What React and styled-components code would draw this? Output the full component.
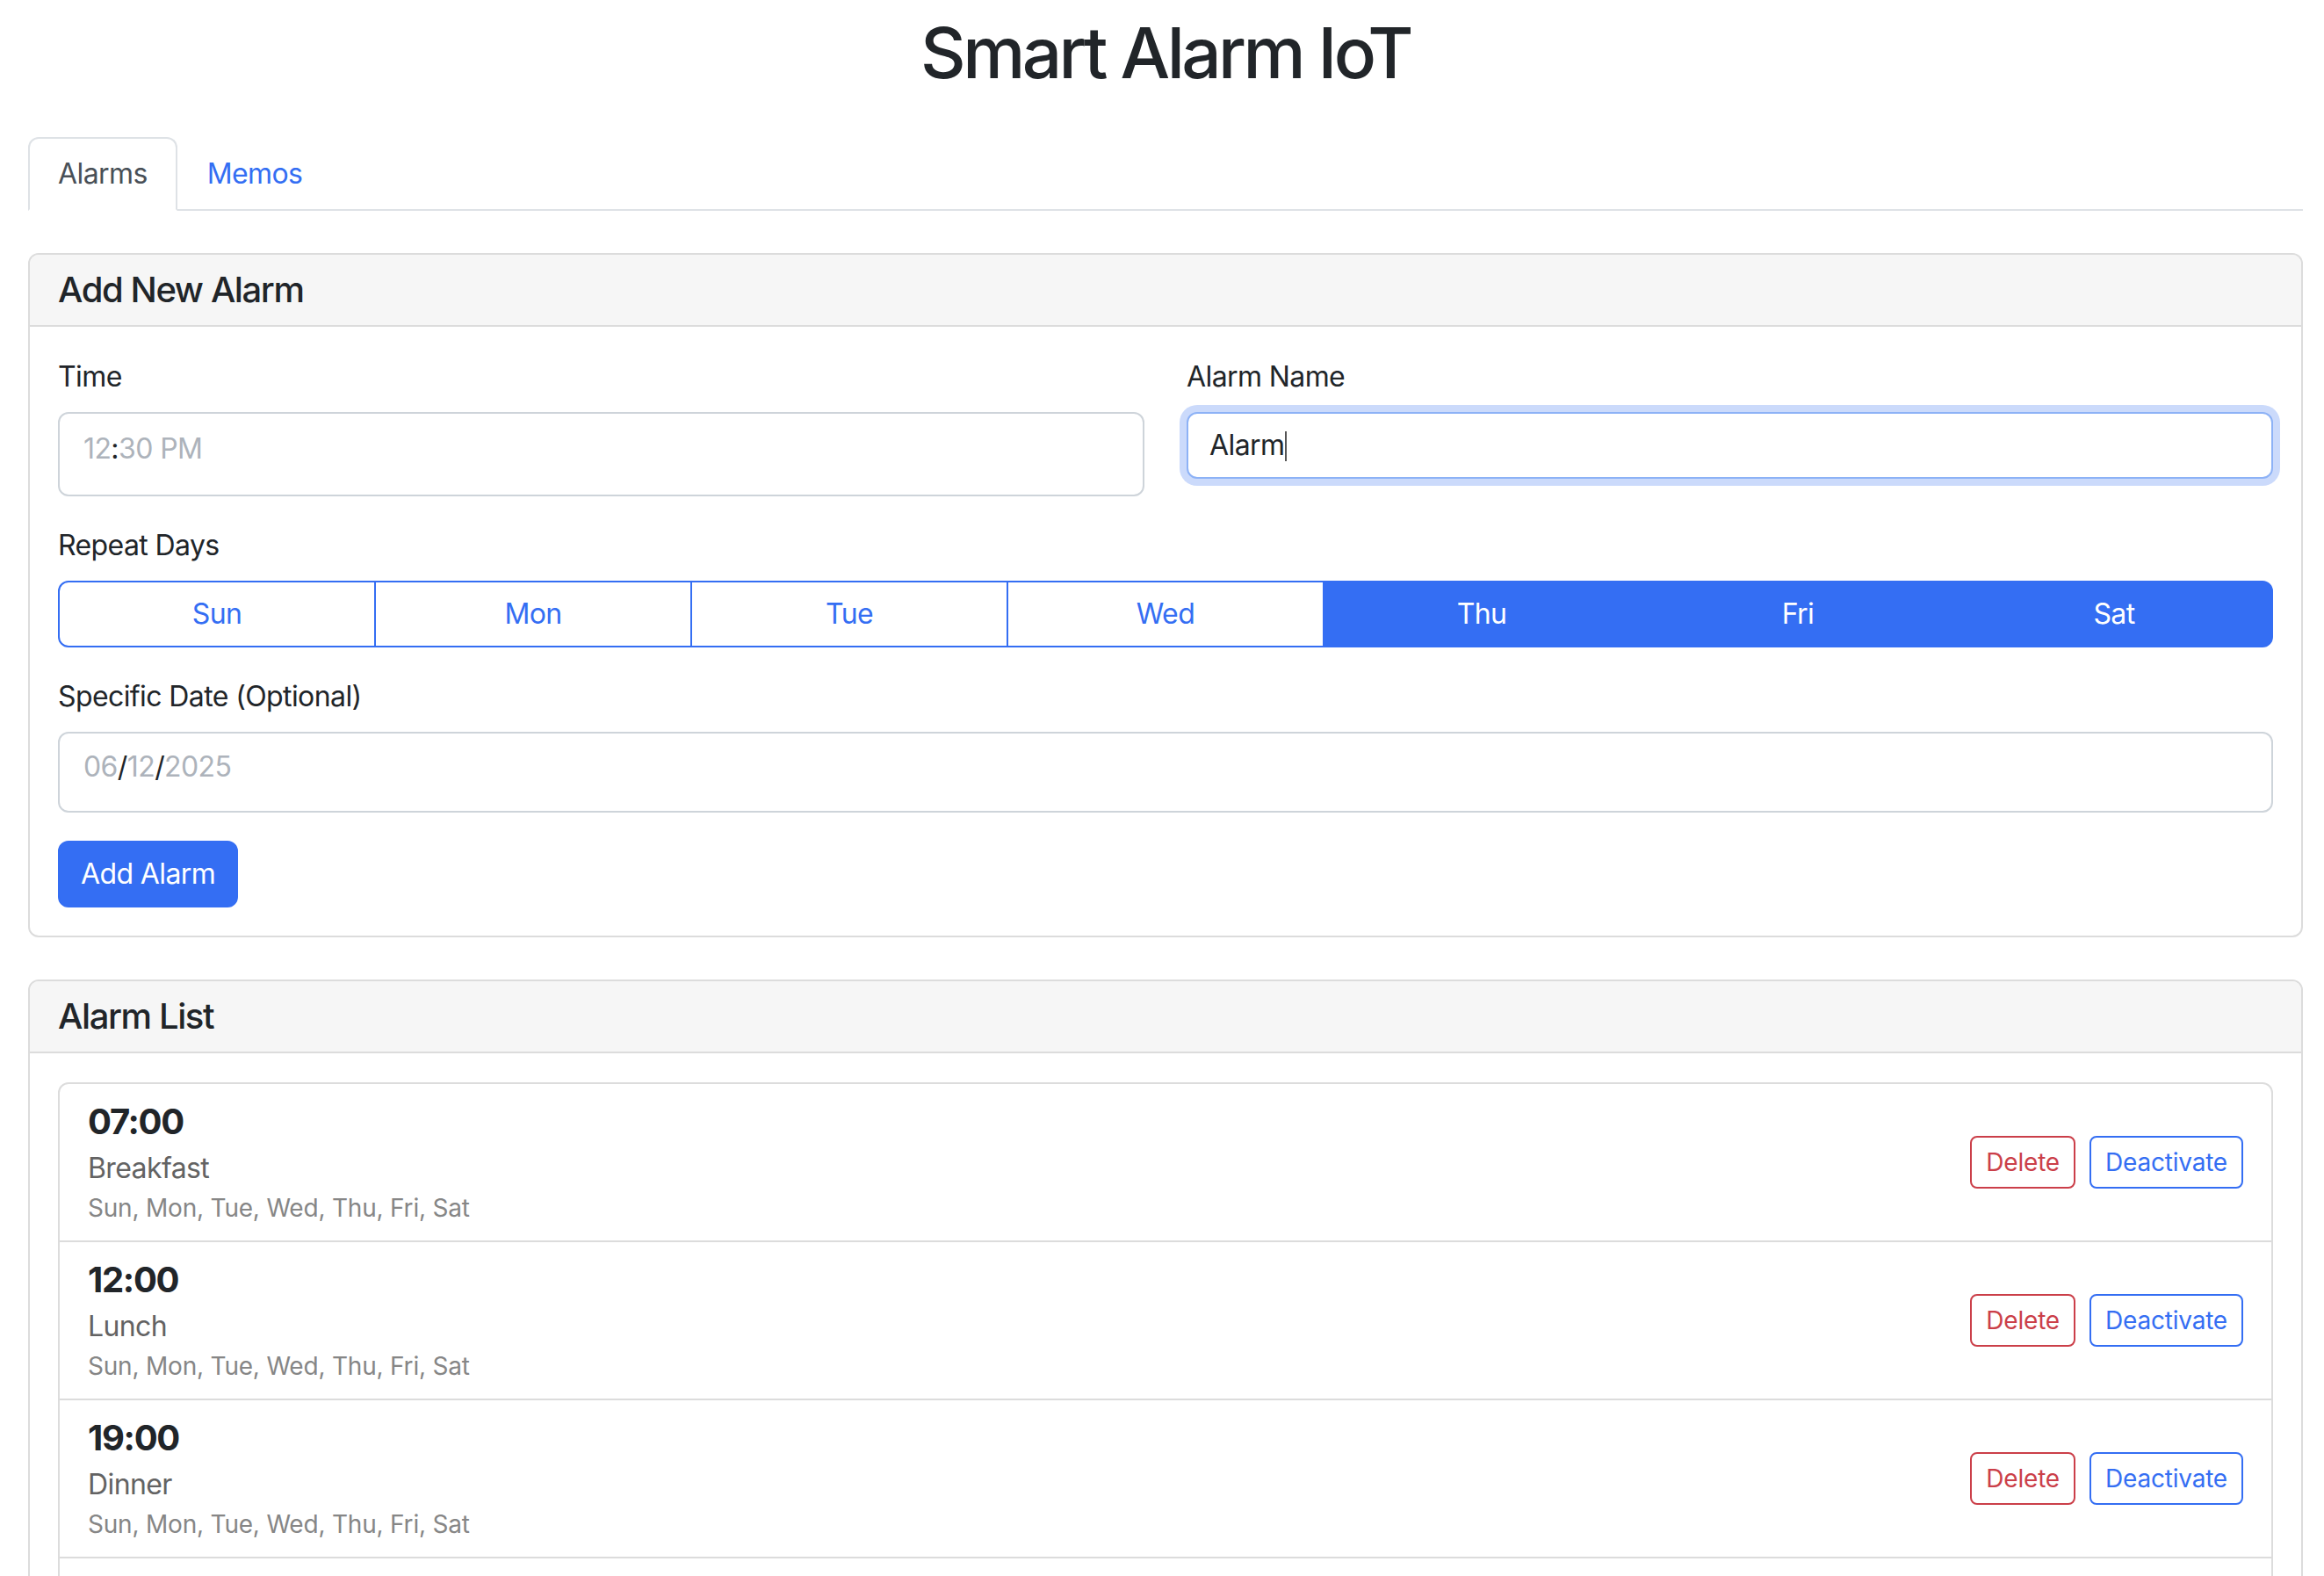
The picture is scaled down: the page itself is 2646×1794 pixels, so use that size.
import React from "react";
import styled, { createGlobalStyle, css } from "styled-components";

const blue = "#346ef3";
const red = "#cb3f49";
const ink = "#212529";

const GlobalStyle = createGlobalStyle`
  html, body {
    margin: 0;
    padding: 0;
    background: #fff;
  }
  body {
    font-family: Inter, "Noto Sans", "Liberation Sans", sans-serif;
    color: ${ink};
    font-size: 32px;
    line-height: 1.5;
    letter-spacing: -0.6px;
  }
  * {
    box-sizing: border-box;
  }
`;

const Page = styled.div`
  padding: 0 24px 40px 32px;
`;

const Title = styled.h1`
  margin: 12px 0 48px;
  text-align: center;
  font-size: 80px;
  font-weight: 500;
  line-height: 96px;
  letter-spacing: -3.6px;
`;

const TabBar = styled.nav`
  display: flex;
  border-bottom: 2px solid #dee2e6;
  margin-bottom: 48px;
`;

const Tab = styled.a`
  display: block;
  padding: 16px 32px;
  margin-bottom: -2px;
  border: 2px solid transparent;
  border-radius: 12px 12px 0 0;
  font-size: 32px;
  line-height: 48px;
  color: ${blue};
  text-decoration: none;
  cursor: pointer;
  ${(p) =>
    p.$active &&
    css`
      color: #495057;
      background: #fff;
      border-color: #dee2e6 #dee2e6 #fff;
    `}
`;

const Card = styled.section`
  border: 2px solid #dcdcdc;
  border-radius: 12px;
  margin-bottom: 48px;
  overflow: hidden;
`;

const CardHeader = styled.div`
  background: #f6f6f6;
  border-bottom: 2px solid #dcdcdc;
  padding: 16px 32px;
`;

const CardTitle = styled.h5`
  margin: 0;
  font-size: 40px;
  font-weight: 500;
  line-height: 48px;
  letter-spacing: -1.4px;
`;

const CardBody = styled.div`
  padding: 33px 32px 32px;
`;

const Row = styled.div`
  display: grid;
  grid-template-columns: 1fr 1fr;
  column-gap: 48px;
  align-items: start;
  margin-bottom: 32px;
`;

const Group = styled.div`
  margin-bottom: ${(p) => p.$mb ?? 32}px;
`;

const Label = styled.label`
  display: block;
  margin-bottom: 16px;
  font-size: 32px;
  line-height: 48px;
`;

const Field = styled.div`
  display: flex;
  align-items: flex-start;
  height: ${(p) => p.$h}px;
  padding: ${(p) => p.$pt}px 24px 0 ${(p) => p.$pl ?? 24}px;
  border: 2px solid #ced4da;
  border-radius: 12px;
  font-size: 32px;
  line-height: 48px;
  color: ${ink};
  background: #fff;
  ${(p) =>
    p.$focused &&
    css`
      border-color: #8db2f6;
      box-shadow: 0 0 0 8px #cbdafb;
    `}
`;

const Seg = styled.span`
  color: #adb3bb;
`;

const Sep = styled.span`
  color: ${ink};
`;

const Caret = styled.span`
  display: inline-block;
  width: 2px;
  height: 34px;
  margin: 8px 0 0 1px;
  background: #555;
`;

const DayGroup = styled.div`
  display: flex;
`;

const DayButton = styled.button`
  flex: 1;
  padding: 12px 24px;
  font-family: inherit;
  font-size: 32px;
  line-height: 48px;
  letter-spacing: -0.6px;
  border: 2px solid ${blue};
  background: ${(p) => (p.$active ? blue : "#fff")};
  color: ${(p) => (p.$active ? "#fff" : blue)};
  border-radius: 0;
  cursor: pointer;
  &:not(:first-child) {
    margin-left: -2px;
  }
  &:first-child {
    border-radius: 12px 0 0 12px;
  }
  &:last-child {
    border-radius: 0 12px 12px 0;
  }
`;

const PrimaryButton = styled.button`
  padding: 12px 24px;
  font-family: inherit;
  font-size: 32px;
  line-height: 48px;
  letter-spacing: -0.6px;
  color: #fff;
  background: ${blue};
  border: 2px solid ${blue};
  border-radius: 12px;
  cursor: pointer;
`;

const AlarmList = styled.div`
  border: 2px solid #dcdcdc;
  border-radius: 12px;
`;

const AlarmItem = styled.div`
  display: flex;
  align-items: center;
  justify-content: space-between;
  padding: 16px 32px;
  & + & {
    border-top: 2px solid #dcdcdc;
  }
`;

const AlarmInfo = styled.div`
  display: flex;
  flex-direction: column;
`;

const AlarmTime = styled.h5`
  margin: 3px 0 5px;
  font-size: 40px;
  font-weight: 700;
  line-height: 48px;
  letter-spacing: -1.3px;
`;

const AlarmName = styled.p`
  margin: 0;
  font-size: 32px;
  line-height: 48px;
  color: #636363;
`;

const AlarmDays = styled.small`
  font-size: 28px;
  line-height: 42px;
  letter-spacing: -0.2px;
  color: #868686;
`;

const Actions = styled.div`
  display: flex;
  gap: 16px;
`;

const OutlineButton = styled.button`
  padding: 7px 16px;
  font-family: inherit;
  font-size: 28px;
  line-height: 42px;
  letter-spacing: -0.2px;
  background: #fff;
  color: ${(p) => p.$color};
  border: 2px solid ${(p) => p.$color};
  border-radius: 8px;
  cursor: pointer;
`;

const days = ["Sun", "Mon", "Tue", "Wed", "Thu", "Fri", "Sat"];
const selected = ["Thu", "Fri", "Sat"];

const alarms = [
  { time: "07:00", name: "Breakfast" },
  { time: "12:00", name: "Lunch" },
  { time: "19:00", name: "Dinner" },
  { time: "22:00", name: "Sleep" },
];

export default function App() {
  return (
    <Page>
      <GlobalStyle />
      <Title>Smart Alarm IoT</Title>

      <TabBar>
        <Tab $active>Alarms</Tab>
        <Tab>Memos</Tab>
      </TabBar>

      <Card>
        <CardHeader>
          <CardTitle>Add New Alarm</CardTitle>
        </CardHeader>
        <CardBody>
          <Row>
            <div>
              <Label>Time</Label>
              <Field $h={96} $pt={16} $pl={27}>
                <Seg>12</Seg>
                <Sep>:</Sep>
                <Seg>30</Seg>
                <Seg>&nbsp;PM</Seg>
              </Field>
            </div>
            <div>
              <Label>Alarm Name</Label>
              <Field $h={76} $pt={12} $focused>
                Alarm
                <Caret />
              </Field>
            </div>
          </Row>

          <Group>
            <Label>Repeat Days</Label>
            <DayGroup>
              {days.map((d) => (
                <DayButton key={d} $active={selected.includes(d)}>
                  {d}
                </DayButton>
              ))}
            </DayGroup>
          </Group>

          <Group>
            <Label>Specific Date (Optional)</Label>
            <Field $h={92} $pt={14} $pl={27}>
              <Seg>06</Seg>
              <Sep>/</Sep>
              <Seg>12</Seg>
              <Sep>/</Sep>
              <Seg>2025</Seg>
            </Field>
          </Group>

          <PrimaryButton>Add Alarm</PrimaryButton>
        </CardBody>
      </Card>

      <Card>
        <CardHeader>
          <CardTitle>Alarm List</CardTitle>
        </CardHeader>
        <CardBody>
          <AlarmList>
            {alarms.map((a) => (
              <AlarmItem key={a.time}>
                <AlarmInfo>
                  <AlarmTime>{a.time}</AlarmTime>
                  <AlarmName>{a.name}</AlarmName>
                  <AlarmDays>{days.join(", ")}</AlarmDays>
                </AlarmInfo>
                <Actions>
                  <OutlineButton $color={red}>Delete</OutlineButton>
                  <OutlineButton $color={blue}>Deactivate</OutlineButton>
                </Actions>
              </AlarmItem>
            ))}
          </AlarmList>
        </CardBody>
      </Card>
    </Page>
  );
}
